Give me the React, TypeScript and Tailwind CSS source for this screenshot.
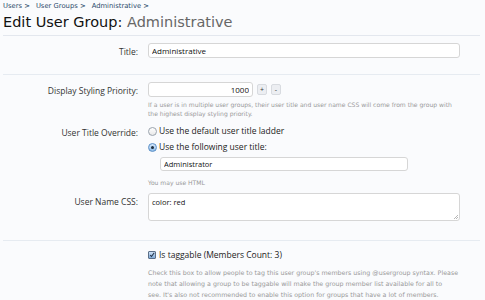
import React from "react";

const label = "text-right text-[8.5px] text-[#333] pt-[3px]";
const hint = "text-[6.05px] leading-[9px] text-[#999] font-['DejaVu_Sans',sans-serif]";
const ui = "font-['Open_Sans',sans-serif]";

export default function App() {
  return (
    <div className={`w-[485px] h-[300px] overflow-hidden bg-[#fafbfd] px-[3px] ${ui}`}>
      {/* breadcrumb */}
      <div className="flex gap-[6px] pt-[2px] h-[10px] text-[6.8px] leading-[8px] text-[#2b4a6a] font-['DejaVu_Sans',sans-serif]">
        <span>Users &gt;</span>
        <span>User Groups &gt;</span>
        <span>Administrative &gt;</span>
      </div>
      <h1 className="h-[26px] pt-[3px] text-[14.5px] leading-[18px] text-[#111] font-['DejaVu_Sans',sans-serif] border-b border-[#e3e7ee] w-[477px]">
        Edit User Group: <span className="text-[#666]">Administrative</span>
      </h1>

      {/* title */}
      <div className="grid grid-cols-[135px_1fr] gap-x-[10px] pt-[7px] h-[39px] border-b border-[#e6ebf1] w-[477px]">
        <div className={label}>Title:</div>
        <input
          readOnly
          value="Administrative"
          className="block w-[312px] h-[15px] bg-white border border-[#d6d6d6] rounded-[3px] px-[3px] text-[8px] text-[#111] outline-none"
        />
      </div>

      {/* priority + overrides */}
      <div className="pt-[7px] h-[166px] border-b border-[#e6ebf1] w-[477px]">
        <div className="grid grid-cols-[135px_1fr] gap-x-[10px]">
          <div className={label}>Display Styling Priority:</div>
          <div>
            <div className="flex items-center gap-[4px] h-[15px]">
              <input
                readOnly
                value="1000"
                className="block w-[105px] h-[15px] bg-white border border-[#d6d6d6] rounded-[3px] px-[3px] text-right text-[8px] text-[#111] outline-none"
              />
              <button className="w-[10px] h-[11px] rounded-[2px] bg-[#eceef2] border border-[#d8dbe0] text-[7px] leading-[9px] text-[#333]">+</button>
              <button className="w-[10px] h-[11px] rounded-[2px] bg-[#eceef2] border border-[#d8dbe0] text-[7px] leading-[9px] text-[#333]">-</button>
            </div>
            <p className={`${hint} mt-[3px] w-[312px]`}>
              If a user is in multiple user groups, their user title and user name CSS will come from the group with the highest display styling priority.
            </p>
          </div>
        </div>

        <div className="grid grid-cols-[135px_1fr] gap-x-[10px] mt-[6px]">
          <div className={label}>User Title Override:</div>
          <div>
            <label className="flex items-center gap-[2px] h-[15px] text-[8.5px] text-[#222]">
              <span className="w-[9px] h-[9px] rounded-full border border-[#9aa3ad] bg-gradient-to-b from-white to-[#e8e8e8]" />
              Use the default user title ladder
            </label>
            <label className="flex items-center gap-[2px] h-[15px] mt-[1px] text-[8.5px] text-[#222]">
              <span className="w-[9px] h-[9px] rounded-full border border-[#5a8fc7] bg-gradient-to-b from-[#d6e8fb] to-[#8ebbe8] flex items-center justify-center">
                <span className="w-[3px] h-[3px] rounded-full bg-[#1d2d3d]" />
              </span>
              Use the following user title:
            </label>
            <input
              readOnly
              value="Administrator"
              className="block ml-[12px] mt-[2px] w-[248px] h-[14px] bg-white border border-[#d6d6d6] rounded-[3px] px-[3px] text-[7.5px] text-[#111] outline-none"
            />
            <p className={`${hint} mt-[7px]`}>You may use HTML</p>
          </div>
        </div>

        <div className="grid grid-cols-[135px_1fr] gap-x-[10px] mt-[6px]">
          <div className={label}>User Name CSS:</div>
          <div className="relative w-[312px] h-[28px] bg-white border border-[#d6d6d6] rounded-[3px] px-[3px] pt-[3px] text-[7.5px] text-[#111]">
            color: red
            <svg className="absolute right-[1px] bottom-[1px]" width="5" height="5" viewBox="0 0 5 5">
              <path d="M1 5L5 1M3 5L5 3" stroke="#999" strokeWidth="0.7" />
            </svg>
          </div>
        </div>
      </div>

      {/* taggable */}
      <div className="grid grid-cols-[135px_1fr] gap-x-[10px] pt-[8px] w-[477px]">
        <div />
        <div>
          <label className="flex items-center gap-[3px] h-[12px] text-[8.5px] text-[#222]">
            <span className="w-[8px] h-[8px] rounded-[1px] border border-[#5b6f88] bg-gradient-to-b from-[#cfe2f7] to-[#7fa9d6] flex items-center justify-center">
              <svg width="8" height="8" viewBox="0 0 8 8">
                <path d="M1.5 4L3.3 6L7 1" stroke="#1e2f44" strokeWidth="1.4" fill="none" />
              </svg>
            </span>
            Is taggable (Members Count: 3)
          </label>
          <p className="text-[6.3px] leading-[11px] text-[#999] font-['DejaVu_Sans',sans-serif] mt-[6px] w-[330px] whitespace-nowrap">
            Check this box to allow people to tag this user group's members using @usergroup syntax. Please
            <br />
            note that allowing a group to be taggable will make the group member list available for all to
            <br />
            see. It's also not recommended to enable this option for groups that have a lot of members.
          </p>
        </div>
      </div>
    </div>
  );
}
